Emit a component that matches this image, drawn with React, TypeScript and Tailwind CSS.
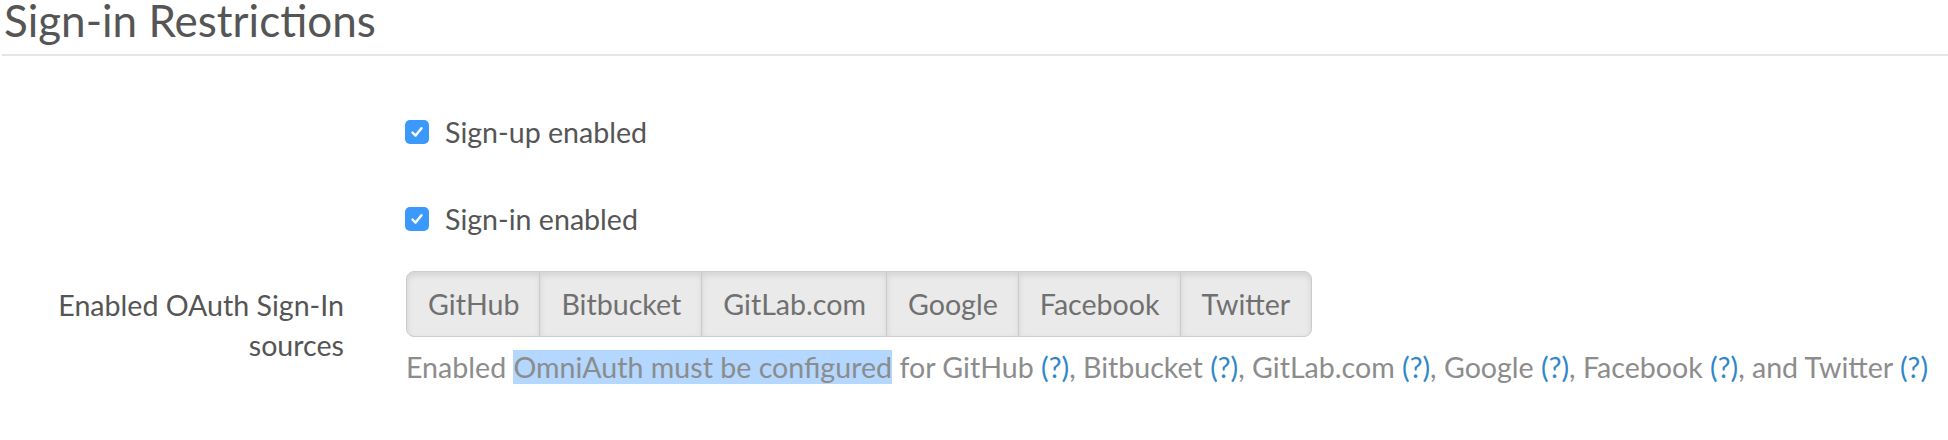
import React from "react";

const sources = ["GitHub", "Bitbucket", "GitLab.com", "Google", "Facebook", "Twitter"];

function Check() {
  return (
    <span className="flex h-[24px] w-[24px] shrink-0 items-center justify-center rounded-[5px] bg-[#3b99fc]">
      <svg width="16" height="16" viewBox="0 0 16 16" fill="none">
        <path d="M3.5 8.5 L6.6 11.6 L12.5 4.2" stroke="white" strokeWidth="2.4" strokeLinecap="round" strokeLinejoin="round" />
      </svg>
    </span>
  );
}

function Q() {
  return <span className="text-[#2f87c8]">(?)</span>;
}

export default function App() {
  return (
    <div className="h-[440px] w-[1948px] overflow-hidden bg-white font-['Lato',sans-serif] text-[28.6px] leading-[40px]">
      <h3 className="pl-[4px] text-[44px] font-normal leading-[40px] text-[#555]">Sign-in Restrictions</h3>
      <div className="ml-[2px] mt-[14px] h-[2px] bg-[#e5e5e5]" />

      <div className="mt-[56px] flex h-[40px] items-center gap-[16px] pl-[405px] text-[#555]">
        <Check />
        <span>Sign-up enabled</span>
      </div>

      <div className="mt-[47px] flex h-[40px] items-center gap-[16px] pl-[405px] text-[#555]">
        <Check />
        <span>Sign-in enabled</span>
      </div>

      <div className="mt-[32px] flex">
        <div className="w-[344px] pt-[14px] text-right text-[#555]">
          Enabled OAuth Sign-In
          <br />
          sources
        </div>
        <div className="ml-[62px] flex flex-col">
          <div className="flex self-start">
            {sources.map((s, i) => (
              <span
                key={s}
                className={
                  "border border-[#cbcbcb] bg-[#eaeaea] px-[21px] py-[12px] text-[#707070] shadow-[inset_0_3px_6px_rgba(0,0,0,0.1)] " +
                  (i === 0 ? "rounded-l-[8px] " : "-ml-[2px] ") +
                  (i === sources.length - 1 ? "rounded-r-[8px]" : "")
                }
              >
                {s}
              </span>
            ))}
          </div>
          <p className="mt-[10px] whitespace-nowrap text-[#8c8c8c]">
            Enabled <span className="bg-[#b3d7fe]">OmniAuth must be configured</span> for GitHub <Q />, Bitbucket <Q />,
            GitLab.com <Q />, Google <Q />, Facebook <Q />, and Twitter <Q />
          </p>
        </div>
      </div>
    </div>
  );
}
